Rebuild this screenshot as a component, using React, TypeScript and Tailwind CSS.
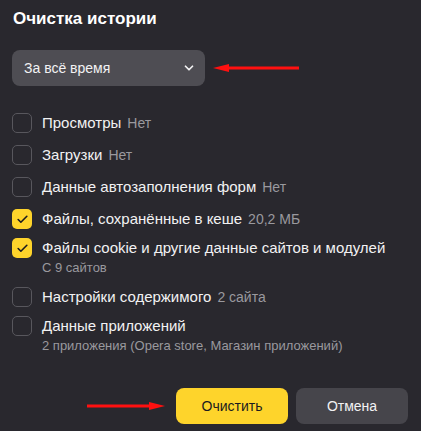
import { Check, ChevronDown } from 'lucide-react';

type Item = { label: string; note?: string; sub?: string; checked?: boolean; gap: string };

// vertical gaps follow the reference exactly; they are not uniform
const ITEMS: Item[] = [
  { label: 'Просмотры', note: 'Нет', gap: 'mt-[27px]' },
  { label: 'Загрузки', note: 'Нет', gap: 'mt-3' },
  { label: 'Данные автозаполнения форм', note: 'Нет', gap: 'mt-3' },
  { label: 'Файлы, сохранённые в кеше', note: '20,2 МБ', checked: true, gap: 'mt-3' },
  { label: 'Файлы cookie и другие данные сайтов и модулей', sub: 'С 9 сайтов', checked: true, gap: 'mt-[9px]' },
  { label: 'Настройки содержимого', note: '2 сайта', gap: 'mt-[11px]' },
  { label: 'Данные приложений', sub: '2 приложения (Opera store, Магазин приложений)', gap: 'mt-[9px]' },
];

function RedArrow({ width, left }: { width: number; left?: boolean }) {
  return (
    <svg width={width} height="10" viewBox={`0 0 ${width} 10`} className={left ? '-scale-x-100' : ''}>
      <line x1="0" y1="5" x2={width - 14} y2="5" stroke="#ff1010" strokeWidth="3" />
      <path d={`M${width} 5 L${width - 16} 1 L${width - 16} 9 Z`} fill="#ff1010" />
    </svg>
  );
}

function Row({ item }: { item: Item }) {
  return (
    <div className={`flex items-start gap-[10px] ${item.gap}`}>
      {item.checked ? (
        <div className="w-5 h-5 rounded-[5px] bg-[#fed42b] flex items-center justify-center flex-shrink-0">
          <Check size={13} strokeWidth={3} className="text-[#1b1b1f]" />
        </div>
      ) : (
        <div className="w-5 h-5 rounded-[5px] border-[1.5px] border-[#58575d] flex-shrink-0" />
      )}
      <div className="flex flex-col">
        <div className="text-[15px] leading-5 text-[#f2f2f3] whitespace-nowrap">
          {item.label}
          {item.note && <span className="ml-[6px] text-[14px] text-[#9a999e]">{item.note}</span>}
        </div>
        {item.sub && <div className="text-[13px] leading-4 mt-[2px] text-[#9a999e] whitespace-nowrap">{item.sub}</div>}
      </div>
    </div>
  );
}

export default function App() {
  return (
    <div
      className="w-[421px] h-[431px] bg-[#29282e] px-3 pt-[7px] flex flex-col"
      style={{ fontFamily: '"Liberation Sans", Arial, sans-serif' }}
    >
      <h1 className="text-[17px] leading-6 font-bold text-white pl-px">Очистка истории</h1>

      <div className="mt-[19px] flex items-center gap-2">
        <div className="w-[193px] h-9 rounded-lg bg-[#4e4d53] flex items-center justify-between pl-3 pr-[9px]">
          <span className="text-[14px] text-[#f2f2f3]">За всё время</span>
          <ChevronDown size={14} strokeWidth={3} className="text-[#f2f2f3]" />
        </div>
        <RedArrow width={86} left />
      </div>

      {ITEMS.map((it) => (
        <Row key={it.label} item={it} />
      ))}

      <div className="mt-auto mb-[7px] flex items-center justify-end pr-px">
        <div className="mr-[11px] flex">
          <RedArrow width={78} />
        </div>
        <button className="w-28 h-9 rounded-lg bg-[#fed42b] text-[14px] text-[#1b1b1f]">Очистить</button>
        <button className="ml-2 w-28 h-9 rounded-lg bg-[#46454b] text-[14px] text-[#f2f2f3]">Отмена</button>
      </div>
    </div>
  );
}
